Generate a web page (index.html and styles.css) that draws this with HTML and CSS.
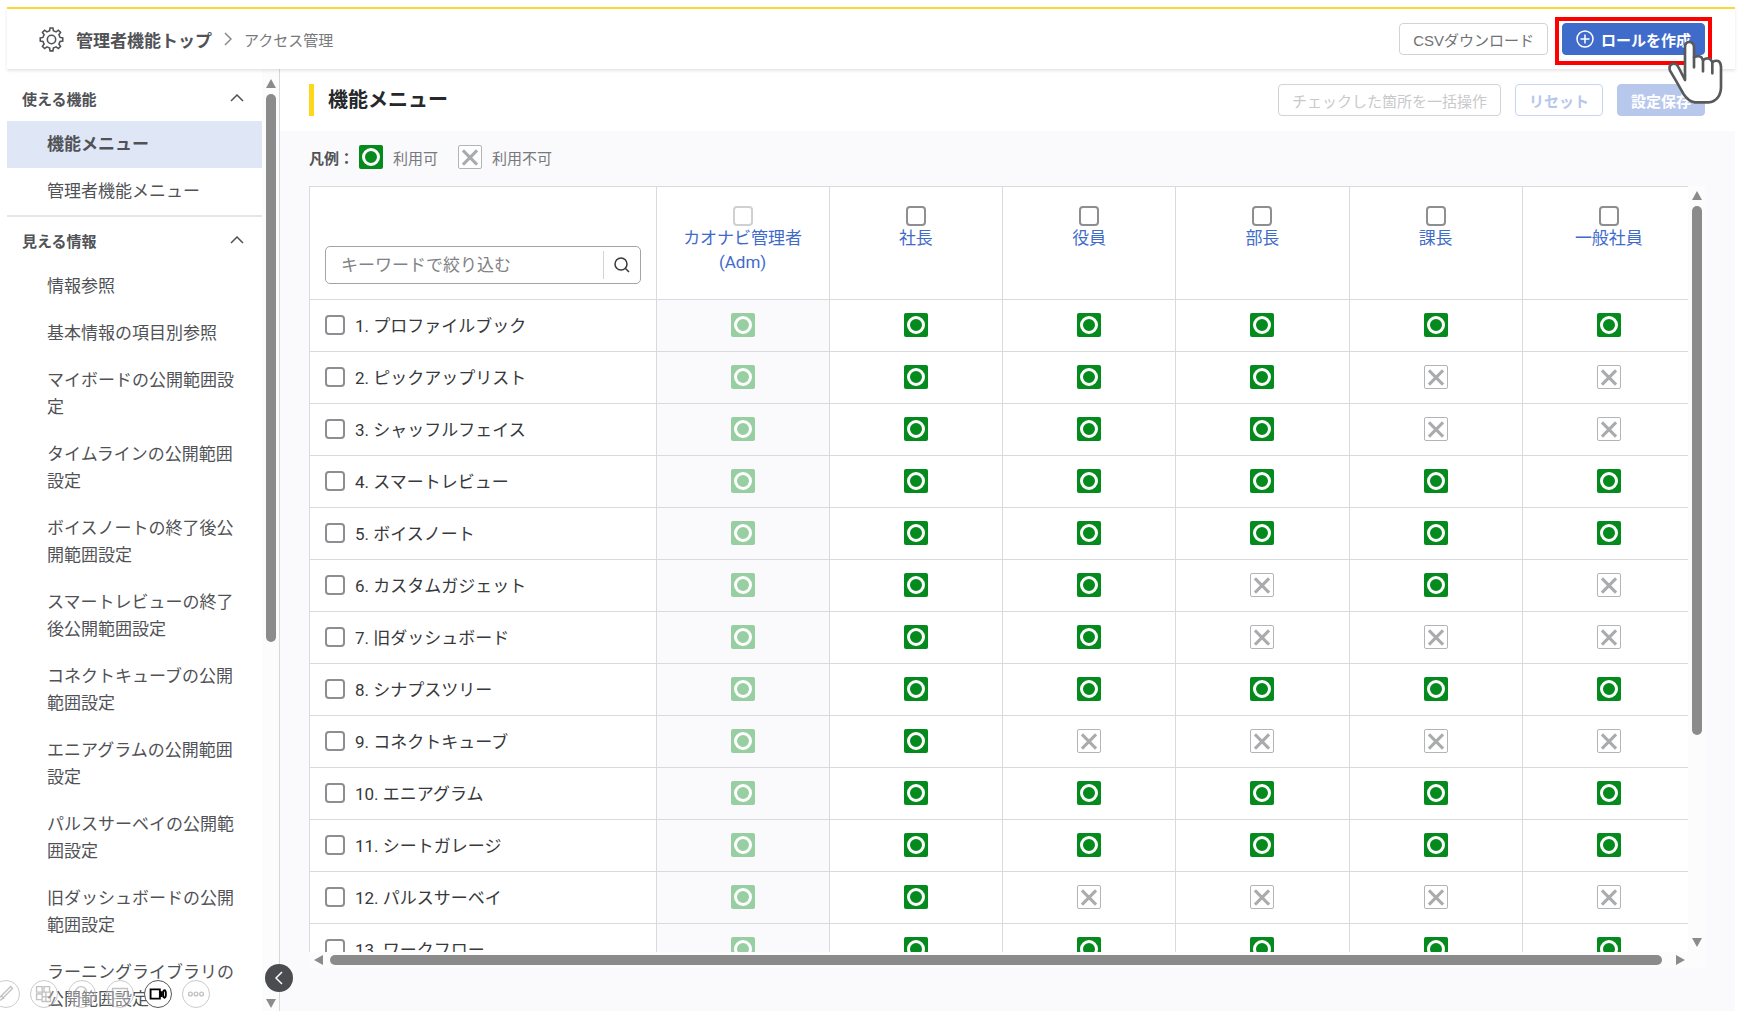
FILE: index.html
```html
<!DOCTYPE html>
<html lang="ja">
<head>
    <meta charset="UTF-8">
    <meta name="viewport" content="width=device-width, initial-scale=1.0">
    <title>アクセス管理</title>
    <link rel="stylesheet" href="styles.css">
</head>
<body>
    <div class="app">
        <header class="header">
            <svg class="gear" viewBox="0 0 24 24" width="25" height="25">
                <path d="M10.2 3.6 10.6 1h2.8l.4 2.6 2.6 1.1 2.2-1.6 2.1 2.1-1.6 2.2 1.1 2.6 2.6.5v2.9l-2.6.4-1.1 2.6 1.6 2.2-2.1 2.1-2.2-1.6-2.6 1.1-.4 2.7h-2.8l-.4-2.7-2.6-1.1-2.2 1.6-2.1-2.1 1.6-2.2-1.1-2.6-2.6-.4v-2.9l2.6-.5 1.1-2.6-1.6-2.2 2.1-2.1 2.2 1.6z"/>
                <circle cx="12" cy="12" r="4"/>
            </svg>
            <a class="home" href="#">管理者機能トップ</a>
            <svg class="crumb" viewBox="0 0 8 14" width="8" height="14"><path d="M1 1l6 6-6 6"/></svg>
            <span class="current">アクセス管理</span>
            <div class="header-actions">
                <button type="button" class="btn">CSVダウンロード</button>
                <div class="highlight">
                    <button type="button" class="btn primary">
                        <svg viewBox="0 0 18 18" width="18" height="18"><circle cx="9" cy="9" r="8"/><path d="M9 4.500v9M4.500 9h9"/></svg>
                        ロールを作成
                    </button>
                </div>
            </div>
        </header>
        <div class="layout">
            <aside class="sidebar">
                <nav class="menu">
                    <section class="group">
                        <h2>使える機能 <svg viewBox="0 0 14 8" width="14" height="8"><path d="M1 7l6-6 6 6"/></svg></h2>
                        <a class="active" href="#">機能メニュー</a>
                        <a href="#">管理者機能メニュー</a>
                    </section>
                    <section class="group">
                        <h2>見える情報 <svg viewBox="0 0 14 8" width="14" height="8"><path d="M1 7l6-6 6 6"/></svg></h2>
                        <a href="#">情報参照</a>
                        <a href="#">基本情報の項目別参照</a>
                        <a href="#">マイボードの公開範囲設定</a>
                        <a href="#">タイムラインの公開範囲設定</a>
                        <a href="#">ボイスノートの終了後公開範囲設定</a>
                        <a href="#">スマートレビューの終了後公開範囲設定</a>
                        <a href="#">コネクトキューブの公開範囲設定</a>
                        <a href="#">エニアグラムの公開範囲設定</a>
                        <a href="#">パルスサーベイの公開範囲設定</a>
                        <a href="#">旧ダッシュボードの公開範囲設定</a>
                        <a href="#">ラーニングライブラリの公開範囲設定</a>
                    </section>
                </nav>
                <div class="scroll-y">
                    <span class="arrow up"></span>
                    <span class="thumb side-thumb"></span>
                    <span class="arrow down"></span>
                </div>
                <button type="button" class="collapse" aria-label="メニューを閉じる">
                    <svg viewBox="0 0 8 14" width="8" height="14"><path d="M7 1L1 7l6 6"/></svg>
                </button>
            </aside>
            <main class="content">
                <div class="title-bar">
                    <h1>機能メニュー</h1>
                    <div class="title-actions">
                        <button type="button" class="btn" disabled>チェックした箇所を一括操作</button>
                        <button type="button" class="btn outline" disabled>リセット</button>
                        <button type="button" class="btn primary" disabled>設定保存</button>
                    </div>
                </div>
                <div class="legend">
                    <b>凡例：</b>
                    <i class="ok"></i><span>利用可</span>
                    <i class="ng"></i><span>利用不可</span>
                </div>
                <div class="grid">
                    <div class="table-view">
                        <table>
                            <thead>
                                <tr>
                                    <th class="name">
                                        <div class="search">
                                            <input type="text" placeholder="キーワードで絞り込む" aria-label="キーワードで絞り込む">
                                            <button type="button" aria-label="検索">
                                                <svg viewBox="0 0 18 18" width="18" height="18"><circle cx="8" cy="8" r="6"/><path d="M12.500 12.500L16 16"/></svg>
                                            </button>
                                        </div>
                                    </th>
                                    <th><input type="checkbox" aria-label="カオナビ管理者" disabled><a href="#">カオナビ管理者<br>(Adm)</a></th>
                                    <th><input type="checkbox" aria-label="社長"><a href="#">社長</a></th>
                                    <th><input type="checkbox" aria-label="役員"><a href="#">役員</a></th>
                                    <th><input type="checkbox" aria-label="部長"><a href="#">部長</a></th>
                                    <th><input type="checkbox" aria-label="課長"><a href="#">課長</a></th>
                                    <th><input type="checkbox" aria-label="一般社員"><a href="#">一般社員</a></th>
                                </tr>
                            </thead>
                            <tbody>
                                <tr>
                                    <td class="name"><label><input type="checkbox">1. プロファイルブック</label></td>
                                    <td class="fixed"><i class="ok"></i></td><td><i class="ok"></i></td><td><i class="ok"></i></td><td><i class="ok"></i></td><td><i class="ok"></i></td><td><i class="ok"></i></td>
                                </tr>
                                <tr>
                                    <td class="name"><label><input type="checkbox">2. ピックアップリスト</label></td>
                                    <td class="fixed"><i class="ok"></i></td><td><i class="ok"></i></td><td><i class="ok"></i></td><td><i class="ok"></i></td><td><i class="ng"></i></td><td><i class="ng"></i></td>
                                </tr>
                                <tr>
                                    <td class="name"><label><input type="checkbox">3. シャッフルフェイス</label></td>
                                    <td class="fixed"><i class="ok"></i></td><td><i class="ok"></i></td><td><i class="ok"></i></td><td><i class="ok"></i></td><td><i class="ng"></i></td><td><i class="ng"></i></td>
                                </tr>
                                <tr>
                                    <td class="name"><label><input type="checkbox">4. スマートレビュー</label></td>
                                    <td class="fixed"><i class="ok"></i></td><td><i class="ok"></i></td><td><i class="ok"></i></td><td><i class="ok"></i></td><td><i class="ok"></i></td><td><i class="ok"></i></td>
                                </tr>
                                <tr>
                                    <td class="name"><label><input type="checkbox">5. ボイスノート</label></td>
                                    <td class="fixed"><i class="ok"></i></td><td><i class="ok"></i></td><td><i class="ok"></i></td><td><i class="ok"></i></td><td><i class="ok"></i></td><td><i class="ok"></i></td>
                                </tr>
                                <tr>
                                    <td class="name"><label><input type="checkbox">6. カスタムガジェット</label></td>
                                    <td class="fixed"><i class="ok"></i></td><td><i class="ok"></i></td><td><i class="ok"></i></td><td><i class="ng"></i></td><td><i class="ok"></i></td><td><i class="ng"></i></td>
                                </tr>
                                <tr>
                                    <td class="name"><label><input type="checkbox">7. 旧ダッシュボード</label></td>
                                    <td class="fixed"><i class="ok"></i></td><td><i class="ok"></i></td><td><i class="ok"></i></td><td><i class="ng"></i></td><td><i class="ng"></i></td><td><i class="ng"></i></td>
                                </tr>
                                <tr>
                                    <td class="name"><label><input type="checkbox">8. シナプスツリー</label></td>
                                    <td class="fixed"><i class="ok"></i></td><td><i class="ok"></i></td><td><i class="ok"></i></td><td><i class="ok"></i></td><td><i class="ok"></i></td><td><i class="ok"></i></td>
                                </tr>
                                <tr>
                                    <td class="name"><label><input type="checkbox">9. コネクトキューブ</label></td>
                                    <td class="fixed"><i class="ok"></i></td><td><i class="ok"></i></td><td><i class="ng"></i></td><td><i class="ng"></i></td><td><i class="ng"></i></td><td><i class="ng"></i></td>
                                </tr>
                                <tr>
                                    <td class="name"><label><input type="checkbox">10. エニアグラム</label></td>
                                    <td class="fixed"><i class="ok"></i></td><td><i class="ok"></i></td><td><i class="ok"></i></td><td><i class="ok"></i></td><td><i class="ok"></i></td><td><i class="ok"></i></td>
                                </tr>
                                <tr>
                                    <td class="name"><label><input type="checkbox">11. シートガレージ</label></td>
                                    <td class="fixed"><i class="ok"></i></td><td><i class="ok"></i></td><td><i class="ok"></i></td><td><i class="ok"></i></td><td><i class="ok"></i></td><td><i class="ok"></i></td>
                                </tr>
                                <tr>
                                    <td class="name"><label><input type="checkbox">12. パルスサーベイ</label></td>
                                    <td class="fixed"><i class="ok"></i></td><td><i class="ok"></i></td><td><i class="ng"></i></td><td><i class="ng"></i></td><td><i class="ng"></i></td><td><i class="ng"></i></td>
                                </tr>
                                <tr>
                                    <td class="name"><label><input type="checkbox">13. ワークフロー</label></td>
                                    <td class="fixed"><i class="ok"></i></td><td><i class="ok"></i></td><td><i class="ok"></i></td><td><i class="ok"></i></td><td><i class="ok"></i></td><td><i class="ok"></i></td>
                                </tr>
                            </tbody>
                        </table>
                    </div>
                    <div class="scroll-y">
                        <span class="arrow up"></span>
                        <span class="thumb grid-thumb"></span>
                        <span class="arrow down"></span>
                    </div>
                    <div class="scroll-x">
                        <span class="arrow left"></span>
                        <span class="thumb"></span>
                        <span class="arrow right"></span>
                    </div>
                </div>
            </main>
        </div>
    </div>

    <!-- slide show controls -->
    <div class="slide-tools">
        <button type="button" aria-label="ペン"><svg viewBox="0 0 28 28"><path d="M6 21l3-1 12-12-2-2L7 18zM9 16l3 3"/></svg></button>
        <button type="button" aria-label="スライド一覧"><svg viewBox="0 0 28 28"><path d="M6 6h6v6H6zM14 6h6v6h-6zM6 14h6v6H6zM12 12h9v10h-9zM12 17h9M16 12v10"/></svg></button>
        <button type="button" aria-label="拡大"><svg viewBox="0 0 28 28"><circle cx="13" cy="12" r="6"/><path d="M17 17l6 6"/></svg></button>
        <button type="button" aria-label="字幕"><svg viewBox="0 0 28 28"><path d="M6 8h16v11H6zM9 15h10"/></svg></button>
        <button type="button" class="on" aria-label="カメラ"><svg viewBox="0 0 28 28"><path d="M6 9h10v10H6zM16 13l2-1v4l-2-1"/><ellipse cx="21" cy="14" rx="1.500" ry="4"/></svg></button>
        <button type="button" aria-label="その他"><svg viewBox="0 0 28 28"><circle cx="8" cy="14" r="2"/><circle cx="14" cy="14" r="2"/><circle cx="20" cy="14" r="2"/></svg></button>
    </div>
    <svg class="hand" viewBox="0 0 264 240" width="88" height="80">
        <path d="M105 150V50Q106 36 118 36T132 50V82Q152 72 159 90Q178 78 187 96Q211 84 213 110V170C213 195 200 216 175 217H135Q115 214 100 191Q80 155 60 122C53 101 77 94 85 111Z"/>
        <path d="M132 82v30M159 90v34M187 96v34"/>
    </svg>
</body>
</html>
```
FILE: styles.css
```css
*,
*::before,
*::after {
    box-sizing: border-box;
}
body {
    margin: 0;
    padding: 7px 3px 0 7px;
    height: 100vh;
    overflow: hidden;
    background-color: #fff;
    color: #505256;
    font-family: Roboto, "Noto Sans CJK JP", sans-serif;
    font-size: 17px;
}
a {
    color: inherit;
    text-decoration: none;
}
svg {
    display: block;
    flex: none;
    fill: none;
    stroke: currentColor;
    stroke-width: 1.5;
}
.app {
    display: flex;
    flex-direction: column;
    height: 100%;
}

/* header */
.header {
    display: flex;
    align-items: center;
    flex: none;
    height: 62px;
    padding: 0 23px 0 32px;
    border-top: 2px solid #fdd835;
    box-shadow: 0 2px 3px rgba(0, 0, 0, 0.1);
    position: relative;
    z-index: 1;
}
.home {
    margin-left: 12px;
    font-weight: bold;
}
.crumb {
    margin: 0 12px;
    color: #87898c;
}
.current {
    font-size: 15px;
    color: #77797c;
}
.header-actions {
    display: flex;
    align-items: center;
    gap: 7px;
    margin-left: auto;
}
.highlight {
    margin-bottom: -4px;
    padding: 2px 3px 6px;
    border: 4px solid #f00;
}
.btn {
    display: flex;
    align-items: center;
    justify-content: center;
    gap: 7px;
    height: 32px;
    padding: 0 13px;
    border: 1px solid #d3d3d5;
    border-radius: 4px;
    background-color: #fff;
    color: #707275;
    font-family: "Liberation Sans", "Noto Sans CJK JP", sans-serif;
    font-size: 15px;
    white-space: nowrap;
}
.btn.primary {
    border-color: #3f6bcb;
    background-color: #3f6bcb;
    color: #fff;
    font-weight: bold;
}
.btn:disabled {
    color: #c8c9cb;
}
.btn.outline:disabled {
    border-color: #c8d5f1;
    color: #b7c7ec;
    font-weight: bold;
}
.btn.primary:disabled {
    border-color: #b8c8ed;
    background-color: #b8c8ed;
    color: #fff;
}

/* sidebar */
.layout {
    display: flex;
    flex: 1;
    min-height: 0;
}
.sidebar {
    display: flex;
    flex: none;
    width: 273px;
    border-right: 1px solid #d8d8da;
    position: relative;
}
.menu {
    flex: 1;
    overflow: hidden;
}
.group:first-child {
    padding-top: 6px;
    border-bottom: 2px solid #e6e6e8;
}
.group h2 {
    display: flex;
    align-items: center;
    justify-content: space-between;
    height: 46px;
    margin: 0;
    padding: 0 18px 0 15px;
    font-size: 15px;
}
.group a {
    display: block;
    padding: 10px 24px 10px 40px;
    line-height: 27px;
}
.group a.active {
    background-color: #dfe7f7;
    font-weight: bold;
}
.collapse {
    position: absolute;
    right: -14px;
    bottom: 19px;
    z-index: 1;
    display: flex;
    align-items: center;
    justify-content: center;
    width: 28px;
    height: 28px;
    padding: 0;
    border: none;
    border-radius: 50%;
    background-color: #4b4c50;
    color: #fff;
}

/* scrollbars */
.scroll-y,
.scroll-x {
    display: flex;
    align-items: center;
    background-color: #fcfcfc;
}
.scroll-y {
    flex-direction: column;
    width: 17px;
    padding: 10px 0 3px;
}
.scroll-x {
    padding: 0 20px 0 5px;
    height: 16px;
}
.thumb {
    border-radius: 5px;
    background-color: #8b8b8b;
}
.scroll-y .thumb {
    width: 10px;
    margin: 6px 0 auto;
}
.scroll-x .thumb {
    flex: 1;
    height: 10px;
    margin: 0 14px 0 7px;
}
.side-thumb {
    height: 59%;
}
.grid-thumb {
    height: 70%;
}
.arrow {
    border: 5px solid transparent;
}
.arrow.up {
    border-top: none;
    border-bottom: 9px solid #8b8b8b;
}
.arrow.down {
    border-bottom: none;
    border-top: 9px solid #8b8b8b;
}
.arrow.left {
    border-left: none;
    border-right: 9px solid #8b8b8b;
}
.arrow.right {
    border-right: none;
    border-left: 9px solid #8b8b8b;
}

/* content */
.content {
    display: flex;
    flex-direction: column;
    flex: 1;
    min-width: 0;
    background-color: #fafafc;
}
.title-bar {
    display: flex;
    align-items: center;
    justify-content: space-between;
    flex: none;
    height: 62px;
    padding: 0 30px 0 29px;
    background-color: #fff;
}
.title-bar h1 {
    margin: 0;
    padding-left: 14px;
    border-left: 5px solid #fdd71c;
    color: #26282b;
    font-size: 20px;
    line-height: 32px;
}
.title-actions {
    display: flex;
    gap: 14px;
}
.legend {
    display: flex;
    align-items: center;
    flex: none;
    height: 55px;
    padding: 0 0 3px 29px;
    font-size: 15px;
}
.legend b {
    margin-right: 5px;
}
.legend span {
    margin: 0 20px 0 10px;
    color: #77797c;
}
.ok,
.ng {
    display: block;
    width: 24px;
    height: 24px;
    border-radius: 2px;
    position: relative;
}
.ok {
    padding: 3px;
    background-color: #048a1d;
}
.ok::after {
    content: "";
    display: block;
    width: 18px;
    height: 18px;
    border: 3px solid #fff;
    border-radius: 50%;
}
.ng {
    border: 1px solid #b4b4b6;
    background-color: #fff;
}
.ng::before,
.ng::after {
    content: "";
    position: absolute;
    top: 10px;
    left: 1px;
    width: 20px;
    height: 3px;
    background-color: #a9abad;
    transform: rotate(45deg);
}
.ng::after {
    transform: rotate(-45deg);
}

/* permission table */
.grid {
    display: grid;
    grid-template-columns: 1fr 17px;
    grid-template-rows: 1fr 16px;
    flex: 1;
    min-height: 0;
    margin: 0 30px 43px 29px;
}
.grid .scroll-y {
    padding: 5px 0;
}
.scroll-x {
    grid-column: 1 / 3;
}
.table-view {
    overflow: hidden;
    background-color: #fff;
}
table {
    width: calc(100% + 8px);
    table-layout: fixed;
    border-collapse: separate;
    border-spacing: 0;
    border-top: 1px solid #dadadc;
    border-left: 1px solid #dadadc;
}
th,
td {
    padding: 0;
    border-right: 1px solid #dadadc;
    border-bottom: 1px solid #dadadc;
}
th {
    height: 113px;
    padding-top: 19px;
    vertical-align: top;
    font-weight: normal;
    line-height: 24px;
    color: #3f6bcb;
}
th a {
    display: block;
}
td {
    height: 52px;
    padding-bottom: 2px;
}
td .ok,
td .ng {
    margin: 0 auto;
}
.name {
    width: 25%;
    padding: 0 15px 2px;
    color: #36383b;
}
th.name {
    padding-bottom: 15px;
    vertical-align: bottom;
}
.name label {
    display: flex;
    align-items: center;
    gap: 10px;
}
.fixed {
    background-color: #fafafc;
}
.fixed .ok {
    background-color: #98cfa2;
}
input[type="checkbox"] {
    appearance: none;
    display: block;
    width: 20px;
    height: 20px;
    margin: 0;
    border: 2px solid #8d8e91;
    border-radius: 4px;
    background-color: #fff;
}
th input[type="checkbox"] {
    margin: 0 auto;
}
input[type="checkbox"]:disabled {
    border-color: #d0d0d2;
}
.search {
    display: flex;
    align-items: center;
    height: 38px;
    border: 1px solid #a3a4a7;
    border-radius: 5px;
}
.search input {
    flex: 1;
    min-width: 0;
    padding: 0 0 0 15px;
    border: none;
    background: none;
    font: inherit;
}
.search input::placeholder {
    color: #808285;
}
.search button {
    display: flex;
    align-items: center;
    justify-content: center;
    width: 37px;
    height: 28px;
    padding: 0;
    border: none;
    border-left: 1px solid #d3d3d5;
    background: none;
    color: #36383b;
}

/* overlays */
.slide-tools {
    position: fixed;
    left: -8px;
    bottom: 3px;
    z-index: 2;
    display: flex;
    gap: 10px;
}
.slide-tools button {
    width: 28px;
    height: 28px;
    padding: 0;
    border: 1px solid #b5b5b5;
    border-radius: 50%;
    background-color: rgba(255, 255, 255, 0.4);
    color: #aaa;
    opacity: 0.7;
}
.slide-tools .on {
    border-color: #555;
    background-color: #fff;
    color: #000;
    opacity: 1;
}
.slide-tools .on svg {
    stroke-width: 2;
}
.hand {
    position: fixed;
    top: 30px;
    right: 0;
    z-index: 3;
    fill: #fff;
    stroke: #58595b;
    stroke-width: 8;
    stroke-linecap: round;
    stroke-linejoin: round;
}
```
